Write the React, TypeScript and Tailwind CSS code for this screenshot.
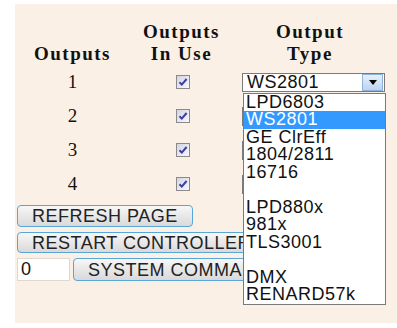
const SERIF = "font-['Liberation_Serif','Times_New_Roman',serif]";
const SANS = "font-['Liberation_Sans',Arial,sans-serif] tracking-[0.5px]";

const OPTIONS = [
  "LPD6803",
  "WS2801",
  "GE ClrEff",
  "1804/2811",
  "16716",
  "",
  "LPD880x",
  "981x",
  "TLS3001",
  "",
  "DMX",
  "RENARD57k",
];

function CheckBox() {
  return (
    <span className="grid size-[14px] place-items-center border border-[#8a8a8a] bg-gradient-to-br from-[#d4d4e4] to-[#f8f8fc]">
      <svg viewBox="0 0 10 10" className="size-[10px]" aria-hidden="true">
        <path d="M1.5 5.2 L3.8 7.6 L8.6 2" fill="none" stroke="#3b3f9e" strokeWidth="2" />
      </svg>
    </span>
  );
}

function Select({ value }: { value?: string }) {
  return (
    <div className="flex h-[19px] w-[143px] items-center border border-[#7a7a7a] bg-white">
      <span className={`flex-1 pl-[4px] text-[18px] leading-none text-[#111] ${SANS}`}>{value}</span>
      <span className="mr-px grid h-[17px] w-[21px] place-items-center border border-[#8fb2db] bg-gradient-to-b from-[#e6f0fb] to-[#bcd4ef]">
        <svg viewBox="0 0 8 5" className="h-[5px] w-[8px]" aria-hidden="true">
          <path d="M0 0 H8 L4 5 Z" fill="#000" />
        </svg>
      </span>
    </div>
  );
}

function Button({ label, className = "" }: { label: string; className?: string }) {
  return (
    <button
      type="button"
      className={`shrink-0 whitespace-nowrap rounded-[4px] border border-[#58a5d8] bg-gradient-to-b from-[#f7f7f7] to-[#d9d9d9] px-[14px] text-[18px] leading-none text-[#222] ${SANS} ${className}`}
    >
      {label}
    </button>
  );
}

export default function App() {
  return (
    <div className="h-[328px] w-[397px] overflow-hidden bg-white pt-[4px]">
      <div className="ml-[15px] h-[319px] bg-[#faf0e6] pl-[2px] pt-[17px]">
        <div className={`grid grid-cols-[111px_107px_1fr] text-[19px] font-bold leading-[22px] tracking-[1.5px] text-[#111] ${SERIF}`}>
          <div className="flex items-end justify-center">Outputs</div>
          <div className="text-center">
            Outputs
            <br />
            In Use
          </div>
          <div className="pr-[12px] text-center">
            Output
            <br />
            Type
          </div>
        </div>

        {[1, 2, 3, 4].map((n) => (
          <div key={n} className="grid h-[34px] grid-cols-[111px_107px_1fr] items-center">
            <div className={`text-center text-[19px] text-[#111] ${SERIF}`}>{n}</div>
            <div className="flex justify-center pl-[2px]">
              <CheckBox />
            </div>
            <div className="relative pl-[7px]">
              <Select value={n === 1 ? "WS2801" : undefined} />
              {n === 1 && (
                <ul
                  className={`absolute left-[8px] top-[20px] z-10 w-[143px] border border-[#7a7a7a] bg-white text-[18px] text-[#111] ${SANS}`}
                >
                  {OPTIONS.map((o, i) => (
                    <li
                      key={i}
                      className={`h-[17.5px] pl-[2px] leading-[17.5px] ${
                        o === "WS2801" ? "bg-[#3399ff] text-white" : ""
                      }`}
                    >
                      {o}
                    </li>
                  ))}
                </ul>
              )}
            </div>
          </div>
        ))}

        <div className="mt-[4px] flex flex-col items-start gap-[5px]">
          <Button label="REFRESH PAGE" className="h-[22px]" />
          <Button label="RESTART CONTROLLER" className="h-[21px]" />
          <div className="flex items-center gap-[3px]">
            <input
              defaultValue="0"
              className={`h-[23px] w-[53px] border border-[#e0d8d0] bg-white pl-[3px] text-[18px] text-[#111] outline-none ${SANS}`}
            />
            <Button label="SYSTEM COMMAND" className="h-[23px]" />
          </div>
        </div>
      </div>
    </div>
  );
}
